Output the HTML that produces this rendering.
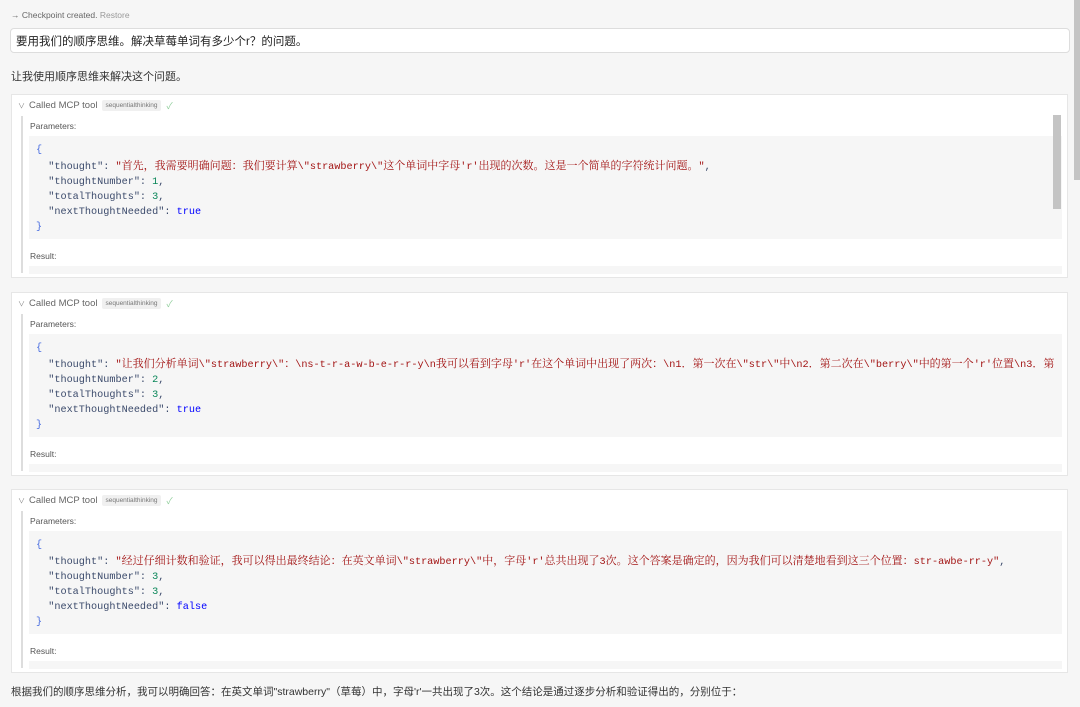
<!DOCTYPE html>
<html><head><meta charset="utf-8">
<style>
*{margin:0;padding:0;box-sizing:border-box}
body{width:1080px;height:707px;overflow:hidden;background:#f6f6f6;font-family:"Liberation Sans","Noto Sans CJK SC",sans-serif;color:#333;position:relative}
.abs{position:absolute}
.cp{left:11px;top:10px;font-size:8.5px;color:#666}
.cp span{color:#999}
.input{left:10px;top:28px;width:1060px;height:25px;background:#fff;border:1px solid #ddd;border-radius:4px;font-size:11.5px;padding:4px 5px;color:#222}
.say{left:11px;font-size:11px;color:#333}
.card{left:11px;width:1057px;height:184px;background:#fff;border:1px solid #e6e6e6}
.hdr{position:absolute;left:6px;top:4px;font-size:9.5px;color:#666;display:flex;align-items:center}
.chev{font-size:7px;margin-right:4px;color:#888}
.tag{background:#f0f0f0;color:#777;font-size:6.5px;padding:2px 3px;margin-left:5px;border-radius:2px}
.ck{color:#8fce9a;margin-left:6px;font-size:9px}
.vl{position:absolute;left:9px;top:21px;width:2px;height:157px;background:#ddd}
.lbl{position:absolute;left:18px;font-size:8.5px;color:#555}
.code{position:absolute;left:17px;top:41px;width:1033px;height:103px;background:#f6f6f6;overflow:hidden;font-family:"Liberation Mono","Noto Sans CJK SC",monospace;font-size:10.2px;line-height:15px;padding:7px 0 0 7px;white-space:pre;color:#3b4a6b}
.code .c{font-family:"Noto Serif CJK SC","Liberation Mono",monospace;font-size:11px}
.s{color:#a31515}.n{color:#098658}.b{color:#0000ff}.br{color:#4a6ee0}
.res{position:absolute;left:17px;top:171px;width:1033px;height:8px;background:#f6f6f6}
</style></head><body>
<div class="abs cp">→ Checkpoint created. <span>Restore</span></div>
<div class="abs input">要用我们的顺序思维。解决草莓单词有多少个r？的问题。</div>
<div class="abs say" style="top:68px">让我使用顺序思维来解决这个问题。</div>

<div class="abs card" style="top:94px">
<div class="hdr"><span class="chev">∨</span>Called MCP tool <span class="tag">sequentialthinking</span><span class="ck">✓</span></div>
<div class="vl"></div>
<div class="lbl" style="top:26px">Parameters:</div>
<div class="code"><span class="br">{</span>
  "thought": <span class="s">"<span class="c">首先，我需要明确问题：我们要计算</span>\"strawberry\"<span class="c">这个单词中字母</span>'r'<span class="c">出现的次数。这是一个简单的字符统计问题。</span>"</span>,
  "thoughtNumber": <span class="n">1</span>,
  "totalThoughts": <span class="n">3</span>,
  "nextThoughtNeeded": <span class="b">true</span>
<span class="br">}</span></div>
<div class="abs" style="left:1041px;top:20px;width:8px;height:94px;background:#c4c4c4"></div>
<div class="lbl" style="top:156px">Result:</div>
<div class="res"></div>
</div>

<div class="abs card" style="top:292px">
<div class="hdr"><span class="chev">∨</span>Called MCP tool <span class="tag">sequentialthinking</span><span class="ck">✓</span></div>
<div class="vl"></div>
<div class="lbl" style="top:26px">Parameters:</div>
<div class="code"><span class="br">{</span>
  "thought": <span class="s">"<span class="c">让我们分析单词</span>\"strawberry\"<span class="c">：</span>\ns-t-r-a-w-b-e-r-r-y\n<span class="c">我可以看到字母</span>'r'<span class="c">在这个单词中出现了两次：</span>\n1<span class="c">．第一次在</span>\"str\"<span class="c">中</span>\n2<span class="c">．第二次在</span>\"berry\"<span class="c">中的第一个</span>'r'<span class="c">位置</span>\n3<span class="c">．第</span></span>
  "thoughtNumber": <span class="n">2</span>,
  "totalThoughts": <span class="n">3</span>,
  "nextThoughtNeeded": <span class="b">true</span>
<span class="br">}</span></div>
<div class="lbl" style="top:156px">Result:</div>
<div class="res"></div>
</div>

<div class="abs card" style="top:489px">
<div class="hdr"><span class="chev">∨</span>Called MCP tool <span class="tag">sequentialthinking</span><span class="ck">✓</span></div>
<div class="vl"></div>
<div class="lbl" style="top:26px">Parameters:</div>
<div class="code"><span class="br">{</span>
  "thought": <span class="s">"<span class="c">经过仔细计数和验证，我可以得出最终结论：在英文单词</span>\"strawberry\"<span class="c">中，字母</span>'r'<span class="c">总共出现了</span>3<span class="c">次。这个答案是确定的，因为我们可以清楚地看到这三个位置：</span>str-awbe-rr-y"</span>,
  "thoughtNumber": <span class="n">3</span>,
  "totalThoughts": <span class="n">3</span>,
  "nextThoughtNeeded": <span class="b">false</span>
<span class="br">}</span></div>
<div class="lbl" style="top:156px">Result:</div>
<div class="res"></div>
</div>

<div class="abs say" style="top:684px;font-size:10.5px">根据我们的顺序思维分析，我可以明确回答：在英文单词"strawberry"（草莓）中，字母'r'一共出现了3次。这个结论是通过逐步分析和验证得出的，分别位于：</div>
<div class="abs" style="left:1074px;top:0;width:6px;height:180px;background:#c4c4c4"></div>
</body></html>
